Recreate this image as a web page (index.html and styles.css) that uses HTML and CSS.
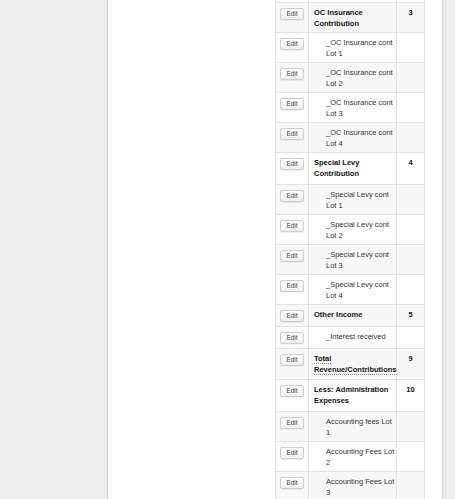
FILE: index.html
```html
<!DOCTYPE html>
<html>
<head>
<meta charset="utf-8">
<link rel="stylesheet" href="styles.css">
</head>
<body>
<div class="page">
  <div class="panel">
    <table class="grid">
      <colgroup><col class="c-act"><col class="c-name"><col class="c-num"></colgroup>
      <tbody>
        <tr class="stub"><td></td><td></td><td></td></tr>
        <tr class="r-group"><td class="act"><span class="btn">Edit</span></td><td class="name strong">OC Insurance<br>Contribution</td><td class="num">3</td></tr>
        <tr class="r-item"><td class="act"><span class="btn">Edit</span></td><td class="name sub">_OC Insurance cont<br>Lot 1</td><td class="num"></td></tr>
        <tr class="r-item"><td class="act"><span class="btn">Edit</span></td><td class="name sub">_OC Insurance cont<br>Lot 2</td><td class="num"></td></tr>
        <tr class="r-item"><td class="act"><span class="btn">Edit</span></td><td class="name sub">_OC Insurance cont<br>Lot 3</td><td class="num"></td></tr>
        <tr class="r-item"><td class="act"><span class="btn">Edit</span></td><td class="name sub">_OC Insurance cont<br>Lot 4</td><td class="num"></td></tr>
        <tr class="r-group tall"><td class="act"><span class="btn">Edit</span></td><td class="name strong">Special Levy<br>Contribution</td><td class="num">4</td></tr>
        <tr class="r-item"><td class="act"><span class="btn">Edit</span></td><td class="name sub">_Special Levy cont<br>Lot 1</td><td class="num"></td></tr>
        <tr class="r-item"><td class="act"><span class="btn">Edit</span></td><td class="name sub">_Special Levy cont<br>Lot 2</td><td class="num"></td></tr>
        <tr class="r-item"><td class="act"><span class="btn">Edit</span></td><td class="name sub">_Special Levy cont<br>Lot 3</td><td class="num"></td></tr>
        <tr class="r-item"><td class="act"><span class="btn">Edit</span></td><td class="name sub">_Special Levy cont<br>Lot 4</td><td class="num"></td></tr>
        <tr class="r-single"><td class="act"><span class="btn">Edit</span></td><td class="name strong">Other Income</td><td class="num">5</td></tr>
        <tr class="r-single"><td class="act"><span class="btn">Edit</span></td><td class="name sub">_Interest received</td><td class="num"></td></tr>
        <tr class="r-total"><td class="act"><span class="btn">Edit</span></td><td class="name strong"><abbr class="total">Total<br>Revenue/Contributions</abbr></td><td class="num">9</td></tr>
        <tr class="r-group tall"><td class="act"><span class="btn">Edit</span></td><td class="name strong">Less: Administration<br>Expenses</td><td class="num">10</td></tr>
        <tr class="r-item"><td class="act"><span class="btn">Edit</span></td><td class="name sub">Accounting fees Lot<br>1</td><td class="num"></td></tr>
        <tr class="r-item"><td class="act"><span class="btn">Edit</span></td><td class="name sub">Accounting Fees Lot<br>2</td><td class="num"></td></tr>
        <tr class="r-item"><td class="act"><span class="btn">Edit</span></td><td class="name sub">Accounting Fees Lot<br>3</td><td class="num"></td></tr>
      </tbody>
    </table>
  </div>
</div>
</body>
</html>
```

FILE: styles.css
```css
html, body {
  margin: 0;
  padding: 0;
}
body {
  background: #ededed;
  font-family: "Liberation Sans", Arial, sans-serif;
  color: #2b2b2b;
  overflow: hidden;
}
.page {
  display: flex;
  padding-left: 107px;
  min-height: 100vh;
}
.panel {
  background: #fff;
  border-left: 1px solid #d6d6d6;
  border-right: 1px solid #dcdcdc;
  box-shadow: -1px 0 0 #e4e4e4, 1px 0 0 #e6e6e6;
  padding-left: 167px;
  box-sizing: border-box;
  width: 336px;
}
.grid {
  border-collapse: collapse;
  table-layout: fixed;
  width: 150px;
  font-size: 7.5px;
  line-height: 11px;
}
.c-act { width: 33px; }
.c-name { width: 88px; }
.c-num { width: 28px; }
.grid td {
  border: 1px solid #e3e3e3;
  padding: 4px 5px 0 5px;
  vertical-align: top;
  box-sizing: border-box;
  background: #fff;
}
.grid tbody tr:nth-child(even) td {
  background: #f8f8f8;
}
.grid tr.stub td {
  height: 2px;
  padding: 0;
  border-top: none;
}
.grid td.act { padding-left: 4px; padding-top: 4px; }
.r-item td, .r-group td { height: 30px; }
.r-group.tall td { height: 32px; }
.r-single td { height: 22px; }
.r-total td { height: 31px; }
.name { white-space: nowrap; }
.strong { font-weight: bold; color: #111; }
.grid td.sub { padding-left: 17px; color: #333; }
.num {
  text-align: center;
  font-weight: bold;
  color: #111;
}
.btn {
  display: block;
  box-sizing: border-box;
  width: 24px;
  height: 12px;
  margin-top: 1px;
  font-size: 6.5px;
  line-height: 10px;
  text-align: center;
  color: #444;
  border: 1px solid #cdcdcd;
  border-radius: 2px;
  background: linear-gradient(#ffffff, #f0f0f0);
  box-shadow: 0 1px 0 rgba(0,0,0,0.05);
}
abbr.total {
  text-decoration: none;
  border-bottom: 1px dotted #8a8a8a;
}
```
